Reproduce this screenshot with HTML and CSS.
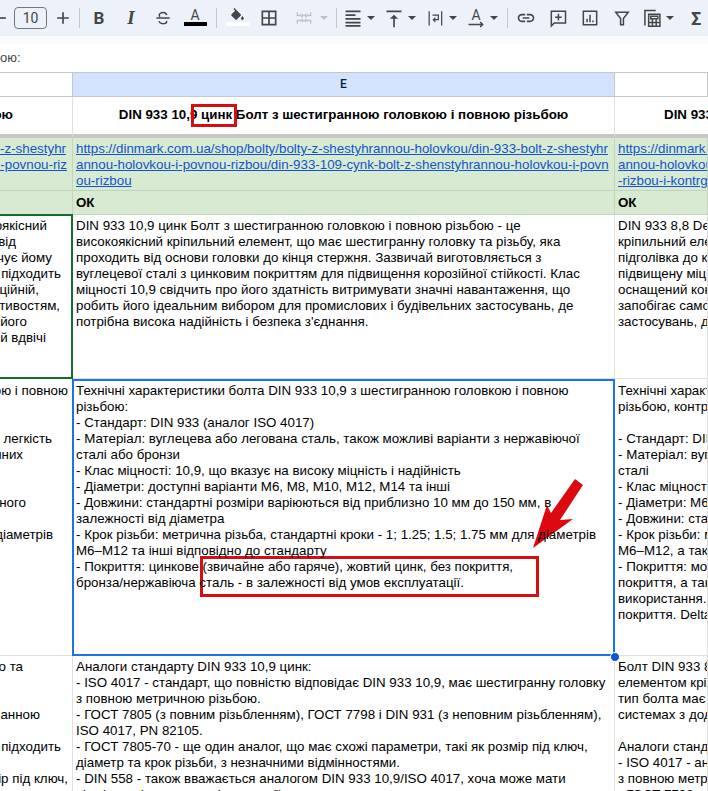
FILE: index.html
```html
<!DOCTYPE html>
<html lang="uk">
  <head>
    <meta charset="UTF-8" />
    <meta name="viewport" content="width=device-width, initial-scale=1.0" />
    <title>DIN 933</title>
    <link rel="stylesheet" href="styles.css">
  </head>
  <body>
    <div class="toolbar">
      <button class="ib ib-minus"><svg viewBox="0 0 24 24"><path d="M5 11h14v2H5z"/></svg></button>
      <div class="size-box">10</div>
      <button class="ib"><svg viewBox="0 0 24 24"><path d="M11 5h2v6h6v2h-6v6h-2v-6H5v-2h6z"/></svg></button>
      <div class="sep"></div>
      <button class="ib glyph glyph-bold">B</button>
      <button class="ib glyph glyph-italic">I</button>
      <button class="ib"><svg viewBox="0 0 24 24"><path class="line" d="M16.5 8.5C16 6.5 14.300 5.500 12 5.500S7.500 6.800 7.500 8.500c0 .8.300 1.500.9 2M4 12h16M16.500 15.500c0 2-1.900 3.300-4.500 3.300s-4.300-1.200-4.800-3"/></svg></button>
      <button class="ib color-btn"><span class="color-letter">A</span><span class="color-bar"></span></button>
      <div class="sep sep-b"></div>
      <button class="ib color-btn"><svg class="bucket" viewBox="0 0 24 20"><path d="M16.560 8.940 7.620 0 6.210 1.410l2.380 2.380-5.150 5.150c-.59.59-.59 1.540 0 2.120l5.500 5.500c.29.29.68.44 1.060.44s.77-.15 1.060-.44l5.500-5.500c.59-.58.59-1.530 0-2.120zM19 11.500s-2 2.170-2 3.500c0 1.100.9 2 2 2s2-.9 2-2c0-1.330-2-3.500-2-3.500z"/></svg><span class="color-bar color-bar-white"></span></button>
      <button class="ib"><svg viewBox="0 0 24 24"><path d="M3 3v18h18V3H3zm8 16H5v-6h6v6zm0-8H5V5h6v6zm8 8h-6v-6h6v6zm0-8h-6V5h6v6z"/></svg></button>
      <button class="ib-caret ib-merge disabled"><svg viewBox="0 0 24 24"><path class="line" d="M4 5v4h5M9 7l2 2-2 2M20 5v4h-5M15 7l-2 2 2 2M4 19v-4h5M9 13l2 2-2 2M20 19v-4h-5M15 13l-2 2 2 2"/></svg><span class="caret"></span></button>
      <div class="sep sep-c"></div>
      <button class="ib-caret"><svg viewBox="0 0 24 24"><path d="M3 3h18v2H3zM3 7.500h12v2H3zM3 12h18v2H3zM3 16.500h18v2H3zM3 20.500h18v2H3z"/></svg><span class="caret"></span></button>
      <button class="ib-caret"><svg viewBox="0 0 24 24"><path d="M3 3h18v2H3zM7 13l5-5 5 5h-4v10h-2V13z"/></svg><span class="caret"></span></button>
      <button class="ib-caret"><svg viewBox="0 0 24 24"><path class="line thin" d="M5 4v17M20 4v17M9 8.500h7v5.500h-6M12.500 11.500 10 14l2.500 2.500"/></svg><span class="caret"></span></button>
      <button class="ib-caret color-btn-rot"><span class="rot-letter">A</span><svg class="rot-arrow" viewBox="0 0 24 8"><path class="line" d="M3 4h17M17 1l3 3-3 3"/></svg><span class="caret"></span></button>
      <div class="sep sep-d"></div>
      <button class="ib"><svg viewBox="0 0 24 24"><path d="M3.900 12c0-1.710 1.390-3.100 3.100-3.100h4V7H7c-2.760 0-5 2.240-5 5s2.240 5 5 5h4v-1.900H7c-1.710 0-3.100-1.390-3.100-3.100zM8 13h8v-2H8v2zm9-6h-4v1.900h4c1.710 0 3.100 1.390 3.100 3.100s-1.390 3.100-3.100 3.100h-4V17h4c2.760 0 5-2.240 5-5s-2.240-5-5-5z"/></svg></button>
      <button class="ib"><svg viewBox="0 0 24 24"><path class="line" d="M4 4h17v14H7.500L4 21.500zM12.500 7v8M8.500 11h8"/></svg></button>
      <button class="ib"><svg viewBox="0 0 24 24"><path class="line" d="M4 4h16v16H4zM8.500 17v-4M12 17V8M15.500 17v-2"/></svg></button>
      <button class="ib"><svg viewBox="0 0 24 24"><path class="line" d="M4.500 5h15l-5.800 7.500V20h-3.400v-7.500z"/></svg></button>
      <button class="ib-caret ib-table"><svg viewBox="0 0 24 24"><path class="line" d="M3.500 21V3h13M8 7.500h13.500V22H8zM10.500 10h8.500v3h-8.500zM8 17.500h13.500M12.500 13v9M17 13v9"/></svg><span class="caret"></span></button>
      <button class="ib glyph glyph-sigma">Σ</button>
    </div>
    <div class="toolbar-edge"></div>

    <div class="formula-bar">ою:</div>

    <div class="sheet">
      <div class="cell col-head"></div>
      <div class="cell col-head col-active">E</div>
      <div class="cell col-head"></div>

      <div class="cell title-cell frag-cell"><div class="frag e13">ою</div></div>
      <div class="cell title-cell">DIN 933 10,9 цинк Болт з шестигранною головкою і повною різьбою</div>
      <div class="cell title-cell title-next">DIN 933 8,8 DeltaTone Болт</div>

      <div class="cell link-cell frag-cell">
        <a class="frag e66">-z-shestyhr</a>
        <a class="frag e67">i-povnou-riz</a>
      </div>
      <div class="cell link-cell">
        <a>https://dinmark.com.ua/shop/bolty/bolty-z-shestyhrannou-holovkou/din-933-bolt-z-shestyhr</a><br>
        <a>annou-holovkou-i-povnou-rizbou/din-933-109-cynk-bolt-z-shenstyhrannou-holovkou-i-povn</a><br>
        <a>ou-rizbou</a>
      </div>
      <div class="cell link-cell">
        <a>https://dinmark.com.ua/shop/bolty</a><br>
        <a>annou-holovkou-i-povnou-rizbou</a><br>
        <a>-rizbou-i-kontrgaikou</a>
      </div>

      <div class="cell ok-cell"></div>
      <div class="cell ok-cell">ОК</div>
      <div class="cell ok-cell">ОК</div>

      <div class="cell text-cell frag-cell cell-green">
        <div class="frag e47">оякісний</div>
        <div class="frag e16">від</div>
        <div class="frag e52">чує йому</div>
        <div class="frag e61">підходить</div>
        <div class="frag e39">ційній,</div>
        <div class="frag e60">тивостям,</div>
        <div class="frag e27">його</div>
        <div class="frag e46">й вдвічі</div>
      </div>
      <div class="cell text-cell">
        DIN 933 10,9 цинк Болт з шестигранною головкою і повною різьбою - це<br>
        високоякісний кріпильний елемент, що має шестигранну головку та різьбу, яка<br>
        проходить від основи головки до кінця стержня. Зазвичай виготовляється з<br>
        вуглецевої сталі з цинковим покриттям для підвищення корозійної стійкості. Клас<br>
        міцності 10,9 свідчить про його здатність витримувати значні навантаження, що<br>
        робить його ідеальним вибором для промислових і будівельних застосувань, де<br>
        потрібна висока надійність і безпека з'єднання.
      </div>
      <div class="cell text-cell">
        DIN 933 8,8 DeltaTone Болт<br>
        кріпильний елемент, що має<br>
        підголівка до кінця стержня<br>
        підвищену міцність. Болт<br>
        оснащений контргайкою, що<br>
        запобігає самовідкручуванню<br>
        застосувань, де потрібна
      </div>

      <div class="cell tech-cell frag-cell">
        <div class="frag e68">ою і повною</div>
        <div class="frag blank"></div>
        <div class="frag blank"></div>
        <div class="frag e52">легкість</div>
        <div class="frag e23">нних</div>
        <div class="frag blank"></div>
        <div class="frag blank"></div>
        <div class="frag e26">ного</div>
        <div class="frag blank"></div>
        <div class="frag e53">діаметрів</div>
      </div>
      <div class="cell tech-cell cell-selected">
        Технічні характеристики болта DIN 933 10,9 з шестигранною головкою і повною<br>
        різьбою:<br>
        - Стандарт: DIN 933 (аналог ISO 4017)<br>
        - Матеріал: вуглецева або легована сталь, також можливі варіанти з нержавіючої<br>
        сталі або бронзи<br>
        - Клас міцності: 10,9, що вказує на високу міцність і надійність<br>
        - Діаметри: доступні варіанти M6, M8, M10, M12, M14 та інші<br>
        - Довжини: стандартні розміри варіюються від приблизно 10 мм до 150 мм, в<br>
        залежності від діаметра<br>
        - Крок різьби: метрична різьба, стандартні кроки - 1; 1.25; 1.5; 1.75 мм для діаметрів<br>
        M6–M12 та інші відповідно до стандарту<br>
        - Покриття: цинкове (звичайне або гаряче), жовтий цинк, без покриття,<br>
        бронза/нержавіюча сталь - в залежності від умов експлуатації.
        <span class="fill-handle"></span>
      </div>
      <div class="cell tech-cell">
        Технічні характеристики болта<br>
        різьбою, контргайкою<br>
        <br>
        - Стандарт: DIN 933<br>
        - Матеріал: вуглецева сталь<br>
        сталі<br>
        - Клас міцності: 8,8<br>
        - Діаметри: M6, M8, M10<br>
        - Довжини: стандартні<br>
        - Крок різьби: метрична<br>
        M6–M12, а також інші<br>
        - Покриття: можливе цинкове<br>
        покриття, а також<br>
        використання. DeltaTone<br>
        покриття. DeltaTone
      </div>

      <div class="cell analog-cell frag-cell">
        <div class="frag e23">о та</div>
        <div class="frag blank"></div>
        <div class="frag blank"></div>
        <div class="frag e40">анною</div>
        <div class="frag blank"></div>
        <div class="frag e61">підходить</div>
        <div class="frag blank"></div>
        <div class="frag e68">ір під ключ,</div>
      </div>
      <div class="cell analog-cell">
        Аналоги стандарту DIN 933 10,9 цинк:<br>
        - ISO 4017 - стандарт, що повністю відповідає DIN 933 10,9, має шестигранну головку<br>
        з повною метричною різьбою.<br>
        - ГОСТ 7805 (з повним різьбленням), ГОСТ 7798 і DIN 931 (з неповним різьбленням),<br>
        ISO 4017, PN 82105.<br>
        - ГОСТ 7805-70 - ще один аналог, що має схожі параметри, такі як розмір під ключ,<br>
        діаметр та крок різьби, з незначними відмінностями.<br>
        - DIN 558 - також вважається аналогом DIN 933 10,9/ISO 4017, хоча може мати<br>
        відмінності в допусках і геометрії головки.
      </div>
      <div class="cell analog-cell">
        Болт DIN 933 8,8 DeltaTone є<br>
        елементом кріплення<br>
        тип болта має шестигранну<br>
        системах з додатковим<br>
        <br>
        Аналоги стандарту DIN<br>
        - ISO 4017 - аналог<br>
        з повною метричною<br>
        - ГОСТ 7798 - аналог
      </div>
    </div>

    <div class="mark mark-title"></div>
    <div class="mark mark-coating"></div>
    <svg class="arrow" viewBox="0 0 708 791">
      <polygon points="533,548 547,505 551,513 575,479 583,485 560,520 573,519" />
    </svg>
  </body>
</html>
```

FILE: styles.css
```css
html,
body {
  margin: 0;
  padding: 0;
  height: 791px;
  overflow: hidden;
  background-color: white;
  font-family: "Liberation Sans", Arial, sans-serif;
  font-size: 13.33px;
  color: #000;
}
button {
  border: none;
  background: none;
  padding: 0;
  margin: 0;
  font-family: inherit;
}
svg {
  fill: #444746;
}
.line {
  fill: none;
  stroke: #444746;
  stroke-width: 1.8;
}
.thin {
  stroke-width: 1.5;
}

/* toolbar */
.toolbar {
  height: 36px;
  background-color: #edf2fa;
  display: flex;
  align-items: center;
  white-space: nowrap;
}
.toolbar-edge {
  height: 8px;
  background-color: #f9fbfd;
}
.ib {
  width: 32px;
  height: 24px;
  flex: none;
  display: flex;
  align-items: center;
  justify-content: center;
}
.ib svg {
  width: 20px;
  height: 20px;
}
.ib-minus {
  width: 24px;
  margin-left: -12px;
  margin-right: 2px;
}
.size-box {
  box-sizing: border-box;
  width: 33px;
  height: 22px;
  flex: none;
  border: 1px solid #747775;
  border-radius: 4px;
  text-align: center;
  line-height: 20px;
  font-family: Roboto, sans-serif;
  font-size: 14px;
  color: #444746;
}
.sep {
  width: 1px;
  height: 20px;
  flex: none;
  background-color: #c7c7c7;
  margin: 0 3px 0 0;
}
.sep-b {
  margin: 0 4px 0 5px;
}
.sep-c {
  margin: 0 6px 0 3px;
}
.sep-d {
  margin: 0 2px 0 0;
}
.glyph {
  color: #444746;
  font-family: Roboto, sans-serif;
  font-size: 17px;
}
.glyph-bold {
  font-weight: bold;
}
.glyph-italic {
  font-style: italic;
  font-family: "Liberation Serif", serif;
  font-weight: bold;
  font-size: 19px;
}
.glyph-sigma {
  font-weight: bold;
  font-size: 18px;
}
.color-btn {
  flex-direction: column;
  justify-content: flex-start;
  padding-top: 2px;
  box-sizing: border-box;
}
.color-letter {
  font-family: Roboto, sans-serif;
  font-size: 14px;
  line-height: 14px;
  color: #444746;
  height: 14px;
}
.color-bar {
  width: 23px;
  height: 4px;
  background-color: #000;
  flex: none;
}
.color-bar-white {
  background-color: #fff;
}
.ib .bucket {
  width: 17px;
  height: 14px;
  flex: none;
}
.ib-caret {
  width: 41px;
  height: 24px;
  flex: none;
  display: flex;
  align-items: center;
  gap: 4px;
}
.ib-caret svg {
  width: 20px;
  height: 20px;
  flex: none;
}
.ib-merge {
  width: 44px;
  margin-left: 4px;
  padding-left: 5px;
  box-sizing: border-box;
  gap: 6px;
}
.ib-merge .line {
  stroke: #bdc1c6;
  stroke-width: 1.6;
}
.ib-merge .caret {
  border-top-color: #bdc1c6;
}
.ib-table {
  margin-left: 4px;
  width: 38px;
}
.caret {
  width: 0;
  height: 0;
  flex: none;
  border-left: 4px solid transparent;
  border-right: 4px solid transparent;
  border-top: 4px solid #444746;
}
.color-btn-rot {
  position: relative;
}
.rot-letter {
  width: 20px;
  flex: none;
  text-align: center;
  font-family: Roboto, sans-serif;
  font-size: 14px;
  color: #444746;
  margin-top: -6px;
}
.ib-caret .rot-arrow {
  position: absolute;
  left: 0;
  top: 15px;
  width: 20px;
  height: 7px;
}

/* formula bar */
.formula-bar {
  height: 28px;
  line-height: 28px;
  color: #444746;
  font-size: 13px;
  overflow: hidden;
}

/* sheet grid */
.sheet {
  display: grid;
  grid-template-columns: 73px 542px 93px;
  grid-template-rows: 24px 41px 53px 24px 164px 277px 140px;
  border-top: 1px solid #c7c7c7;
}
.cell {
  box-sizing: border-box;
  border-right: 1px solid #e0e0e0;
  border-bottom: 1px solid #e0e0e0;
  padding: 3px 0 0 3px;
  line-height: 16px;
  white-space: nowrap;
  overflow: hidden;
}
.col-head {
  padding: 0;
  text-align: center;
  line-height: 23px;
  font-family: Roboto, sans-serif;
  font-size: 12px;
  font-weight: 500;
  color: #041e49;
  border-color: #c7c7c7;
}
.col-active {
  background-color: #d3e3fd;
}
.title-cell {
  padding: 10px 0 0;
  text-align: center;
  font-weight: bold;
  border-bottom: 4px solid #c7c7c7;
}
.title-next {
  text-align: left;
  padding-left: 49px;
  border-right: none;
}
.link-cell,
.ok-cell {
  background-color: #d9ead3;
  border-color: #c4d4bf;
}
.link-cell a {
  color: #1155cc;
  text-decoration: underline;
}
.ok-cell {
  font-weight: bold;
  padding-top: 4px;
}
.tech-cell {
  padding-top: 4px;
}
.frag-cell {
  display: flex;
  flex-direction: column;
  align-items: flex-end;
  padding-left: 0;
}
.frag {
  height: 16px;
  flex: none;
}
.blank {
  width: 1px;
}

/* where the cut-off text of the column to the left ends */
.e13 { margin-right: 59px; }
.e16 { margin-right: 56px; }
.e23 { margin-right: 49px; }
.e26 { margin-right: 46px; }
.e27 { margin-right: 45px; }
.e39 { margin-right: 33px; }
.e40 { margin-right: 32px; }
.e46 { margin-right: 26px; }
.e47 { margin-right: 25px; }
.e52 { margin-right: 20px; }
.e53 { margin-right: 19px; }
.e60 { margin-right: 12px; }
.e61 { margin-right: 11px; }
.e66 { margin-right: 6px; }
.e67 { margin-right: 5px; }
.e68 { margin-right: 4px; }

/* selected cells */
.cell-green {
  border: none;
  box-shadow: inset 0 2px 0 #146c2e, inset 0 -2px 0 #146c2e, inset -2px 0 0 #146c2e;
  margin-top: -1px;
  padding: 4px 1px 0 0;
  height: 165px;
}
.cell-selected {
  overflow: visible;
  position: relative;
  z-index: 1;
  border: none;
  box-shadow: inset 0 2px 0 #1a73e8, inset 0 -2px 0 #1a73e8, inset -2px 0 0 #1a73e8, -1px 0 0 #1a73e8, inset 1px 0 0 #1a73e8;
}
.fill-handle {
  position: absolute;
  right: -4px;
  bottom: -5px;
  width: 8px;
  height: 8px;
  border-radius: 50%;
  background-color: #0b57d0;
  border: 1px solid white;
  margin: -1px;
}

/* red annotations drawn over the sheet */
.mark {
  position: absolute;
  box-sizing: border-box;
  border: 3px solid #d90c12;
}
.mark-title {
  left: 191px;
  top: 104px;
  width: 46px;
  height: 23px;
}
.mark-coating {
  left: 200px;
  top: 556px;
  width: 339px;
  height: 41px;
}
.arrow {
  position: absolute;
  left: 0;
  top: 0;
  width: 708px;
  height: 791px;
  fill: #dc0a0f;
  pointer-events: none;
}
```
